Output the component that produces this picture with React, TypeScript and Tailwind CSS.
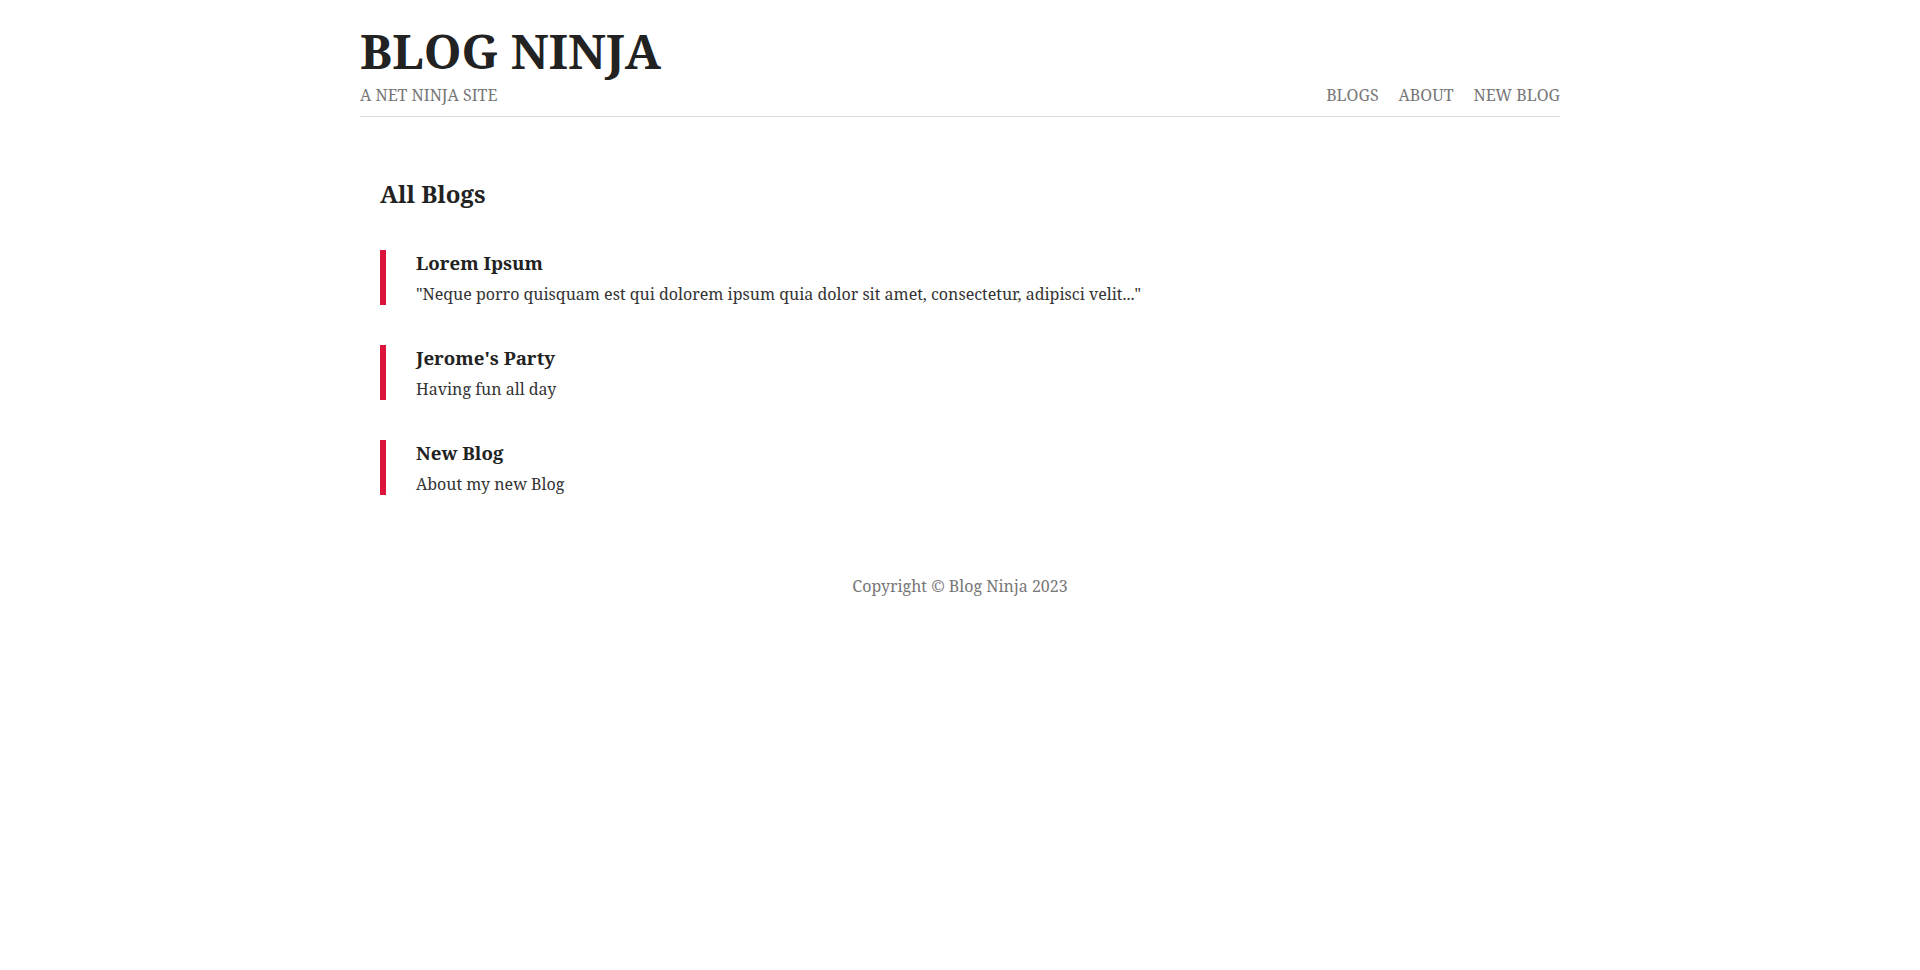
const blogs = [
  {
    title: "Lorem Ipsum",
    snippet:
      '"Neque porro quisquam est qui dolorem ipsum quia dolor sit amet, consectetur, adipisci velit..."',
  },
  { title: "Jerome's Party", snippet: "Having fun all day" },
  { title: "New Blog", snippet: "About my new Blog" },
];

const App = () => {
  return (
    <div className="min-h-screen bg-white font-['Noto_Serif','DejaVu_Serif',serif] text-[#222]">
      <div className="mx-auto w-[1200px] pt-[27px]">
        <nav className="flex items-end justify-between border-b border-[#ddd] pb-[11px]">
          <div>
            <h1 className="text-[48px] font-bold leading-[48px]">BLOG NINJA</h1>
            <p className="mt-[10px] text-[16px] leading-[20px] text-[#777]">
              A NET NINJA SITE
            </p>
          </div>
          <div className="flex gap-[20px] text-[16px] leading-[20px] text-[#777]">
            <a href="#">BLOGS</a>
            <a href="#">ABOUT</a>
            <a href="#">NEW BLOG</a>
          </div>
        </nav>

        <main className="px-[20px] pt-[61px]">
          <h2 className="text-[24px] font-bold leading-[32px]">All Blogs</h2>
          <div className="mt-[40px] flex flex-col gap-[40px]">
            {blogs.map((blog) => (
              <a
                key={blog.title}
                href="#"
                className="block border-l-[6px] border-[crimson] pl-[30px]"
              >
                <h3 className="mb-[7px] text-[18.7px] font-bold leading-[26px]">
                  {blog.title}
                </h3>
                <p className="text-[16px] leading-[22px] text-[#333]">
                  {blog.snippet}
                </p>
              </a>
            ))}
          </div>
        </main>

        <footer className="mt-[80px] text-center text-[16px] leading-[22px] text-[#777]">
          Copyright © Blog Ninja 2023
        </footer>
      </div>
    </div>
  );
};

export default App;
